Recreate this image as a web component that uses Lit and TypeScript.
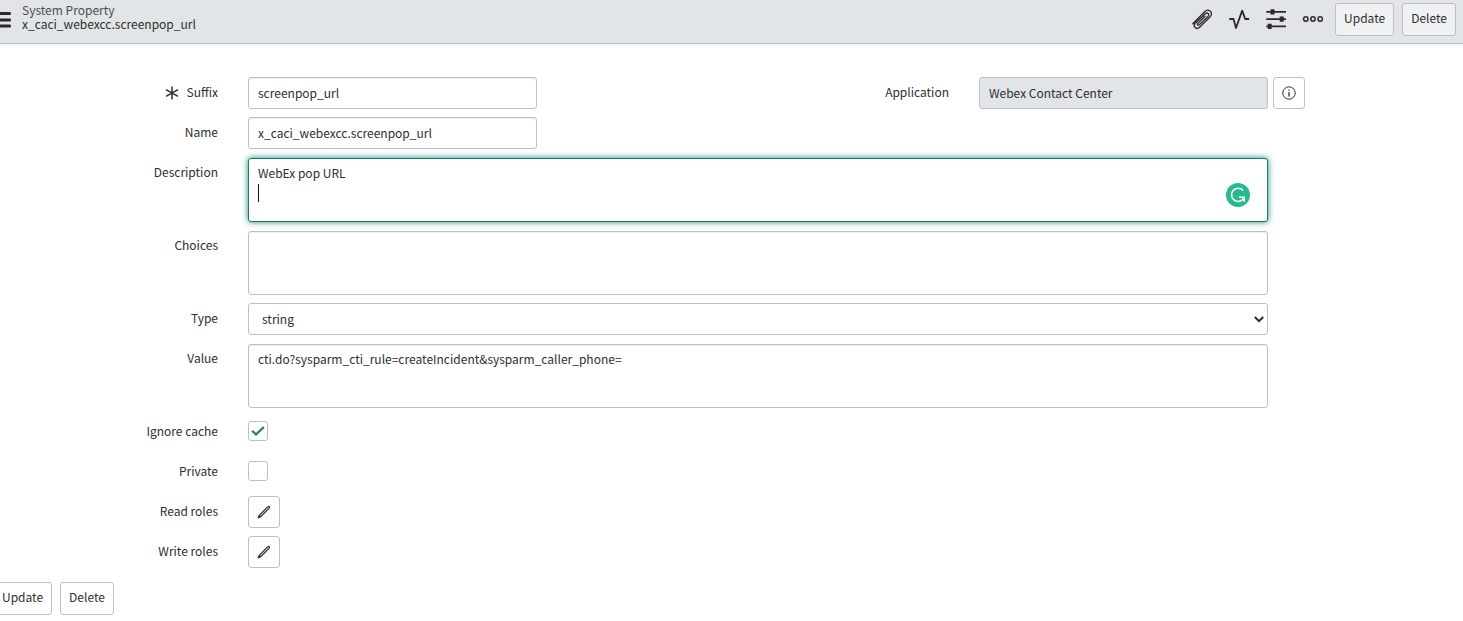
import { LitElement, html, css, nothing } from "lit";
import { customElement, state } from "lit/decorators.js";

const pencil = html`<svg class="icon" viewBox="0 0 14 14" width="14" height="14" fill="#c4c4c4" stroke="#2e2e2e" stroke-width="1.1" stroke-linejoin="round" aria-hidden="true">
  <path d="M1.300 12.700 2.700 9.800 10.800 1.700Q11.600 1 12.300 1.700T12.300 3.200L4.200 11.300Z" />
  <path d="M1.300 12.700 2.300 10.700 3.300 11.700Z" fill="#2e2e2e" />
</svg>`;

const asterisk = html`<svg class="required" viewBox="0 0 14 14" width="14" height="14" fill="none" stroke="#2e2e2e" stroke-width="1.5" role="img" aria-label="Required">
  <path d="M7 .5V13.500M1 3.600 13 10.400M13 3.600 1 10.400" />
</svg>`;

@customElement("app-root")
export class AppRoot extends LitElement {
  @state() private ignoreCache = true;
  @state() private isPrivate = false;

  static styles = css`
    :host {
      display: block;
      background: #fff;
      color: #2e2e2e;
      font-family: "Noto Sans CJK SC", "Noto Sans", sans-serif;
      font-size: 12px;
      line-height: 20px;
    }
    * {
      box-sizing: border-box;
    }
    svg {
      display: block;
      flex: none;
    }
    button,
    input,
    textarea,
    select {
      margin: 0;
      font: inherit;
      color: inherit;
    }
    .header {
      display: flex;
      align-items: flex-start;
      justify-content: space-between;
      height: 44px;
      padding: 3px 7px 0 0;
      background: #e1e5e8;
      border-bottom: 1px solid #bfc1c3;
      box-shadow: 0 1px 1px #ececec;
    }
    .heading,
    .tools,
    .footer {
      display: flex;
    }
    .heading {
      gap: 10px;
    }
    .tools {
      align-items: center;
      gap: 8px;
    }
    .icons {
      display: flex;
      gap: 13px;
      padding: 0 2px 1px 0;
    }
    .plain {
      padding: 0;
      border: 0;
      background: none;
    }
    .menu {
      padding-top: 5px;
    }
    .title {
      margin: 0;
      font-size: 12px;
      font-weight: 400;
      line-height: 14px;
    }
    .title span {
      display: block;
    }
    .table {
      color: #4b4e50;
    }
    .button {
      height: 33px;
      padding: 0 8px 3px;
      border: 1px solid #bdc0c2;
      border-radius: 3px;
      background: #fff;
      white-space: nowrap;
    }
    .header .button {
      background: #f0f1f3;
    }
    .form {
      display: grid;
      gap: 8px;
      padding-top: 33px;
    }
    .row {
      display: grid;
      grid-template-columns: 248px 289fr 442fr 289fr 195px;
      min-height: 32px;
    }
    .label {
      display: flex;
      justify-content: flex-end;
      gap: 8px;
      padding: 5px 30px 0 0;
      height: 30px;
    }
    .required {
      margin-top: 4px;
    }
    .field {
      width: 100%;
      height: 32px;
      padding: 0 9px 2px;
      border: 1px solid #bdc0c2;
      border-radius: 3px;
      background: #fff;
      box-shadow: inset 0 1px 1px #eee;
      outline: none;
    }
    .field[readonly] {
      background: #e1e5e8;
      box-shadow: none;
    }
    .wide {
      grid-column: 2 / 5;
      position: relative;
    }
    .area {
      display: block;
      height: 64px;
      margin-top: 1px;
      padding: 4px 9px;
      resize: none;
    }
    .active {
      border-color: #1f7a68;
      box-shadow: 0 0 6px #1f8476;
    }
    .caret {
      position: absolute;
      left: 10px;
      top: 27px;
      width: 1px;
      height: 18px;
      background: #111;
    }
    .assistant {
      position: absolute;
      right: 18px;
      top: 26px;
    }
    .select {
      appearance: none;
      padding: 0 13px;
      box-shadow: none;
    }
    .chevron {
      position: absolute;
      right: 4px;
      top: 13px;
      pointer-events: none;
    }
    .info,
    .edit {
      display: flex;
      align-items: center;
      justify-content: center;
      width: 32px;
      height: 32px;
      padding: 0;
    }
    .info {
      margin-left: 5px;
    }
    .check {
      display: grid;
      width: 20px;
      height: 20px;
      margin-top: 5px;
    }
    .box,
    .tick {
      grid-area: 1 / 1;
    }
    .box {
      appearance: none;
      width: 20px;
      height: 20px;
      border: 1px solid #bdc0c2;
      border-radius: 3px;
      background: #fff;
    }
    .tick {
      place-self: center;
      z-index: 1;
      pointer-events: none;
    }
    .footer {
      gap: 8px;
      margin: 14px 0 6px -7px;
    }
  `;

  private checkbox(id: string, label: string, checked: boolean, change: (v: boolean) => void) {
    return html`<div class="row">
      <label class="label" for=${id}>${label}</label>
      <div class="check">
        <input class="box" id=${id} type="checkbox" .checked=${checked}
          @change=${(e: Event) => change((e.target as HTMLInputElement).checked)} />
        ${checked
          ? html`<svg class="tick" viewBox="0 0 14 12" width="14" height="12" fill="none" stroke="#1f7a68" stroke-width="2.200" aria-hidden="true"><path d="M1.200 5.800 5 9.500 12.800 2" /></svg>`
          : nothing}
      </div>
    </div>`;
  }

  private roles(id: string, label: string) {
    return html`<div class="row">
      <label class="label" for=${id}>${label}</label>
      <button class="button edit" id=${id} type="button">${pencil}</button>
    </div>`;
  }

  render() {
    return html`
      <header class="header">
        <div class="heading">
          <button class="plain menu" type="button" aria-label="Menu">
            <svg viewBox="0 0 12 18" width="12" height="18" fill="#2a2a2c"><path d="M0 1h10q1 0 1 1.500T10 4H0ZM0 7.500h10q1 0 1 1.500t-1 1.500H0ZM0 13.500h10q1 0 1 1.500t-1 1.500H0Z" /></svg>
          </button>
          <h1 class="title"><span class="table">System Property</span><span>x_caci_webexcc.screenpop_url</span></h1>
        </div>
        <div class="tools">
          <div class="icons">
            <button class="plain" type="button" aria-label="Attachments">
              <svg viewBox="0 0 24 24" width="24" height="24" fill="none" stroke="#2a2a2c" stroke-width="1.300" stroke-linecap="round"><path d="M2.800 16.800 14.600 4.700c4-3.900 9.400.9 5.600 5.100L9.600 20.200c-3.400 3.100-7.200-.8-4.400-3.900L15.500 6.600c2.200-1.600 4.300.6 2.700 2.600L9.300 17.800c-1.400 1-2.500-.1-1.500-1.400L15 9.300" /></svg>
            </button>
            <button class="plain" type="button" aria-label="Activity stream">
              <svg viewBox="0 0 24 24" width="24" height="24" fill="none" stroke="#2a2a2c" stroke-width="1.800" stroke-linejoin="round"><path d="M2.300 12H6.500L9 21 15.200 3.600 18.200 12H22.200" /></svg>
            </button>
            <button class="plain" type="button" aria-label="Personalize form">
              <svg viewBox="0 0 24 24" width="24" height="24" fill="#2a2a2c"><path d="M2.300 4H22V5.800H2.300ZM6.500 2.200h4v5.400h-4ZM2.300 11.200H22V13H2.300ZM15.700 9.400h4v5.400h-4ZM2.300 18.500H22v1.800H2.300ZM3.700 16.700h4v5.400h-4Z" /></svg>
            </button>
            <button class="plain" type="button" aria-label="More options">
              <svg viewBox="0 0 24 24" width="24" height="24" fill="none" stroke="#2a2a2c" stroke-width="1.500"><circle cx="4.800" cy="12" r="2.200" /><circle cx="12" cy="12" r="2.200" /><circle cx="19.200" cy="12" r="2.200" /></svg>
            </button>
          </div>
          <button class="button" type="button">Update</button>
          <button class="button" type="button">Delete</button>
        </div>
      </header>
      <main>
        <form class="form" @submit=${(e: Event) => e.preventDefault()}>
          <div class="row">
            <label class="label" for="suffix">${asterisk}Suffix</label>
            <input class="field" id="suffix" type="text" value="screenpop_url" />
            <label class="label" for="application">Application</label>
            <input class="field" id="application" type="text" value="Webex Contact Center" readonly />
            <button class="button info" type="button" aria-label="Preview application">
              <svg viewBox="0 0 14 14" width="14" height="14" fill="none" stroke="#2e2e2e"><circle cx="7" cy="7" r="6.200" /><path d="M7 6v4.500M7 3.500v1.300" stroke-width="1.300" /></svg>
            </button>
          </div>
          <div class="row">
            <label class="label" for="name">Name</label>
            <input class="field" id="name" type="text" value="x_caci_webexcc.screenpop_url" />
          </div>
          <div class="row">
            <label class="label" for="description">Description</label>
            <div class="wide">
              <textarea class="field area active" id="description" spellcheck="false" .value=${"WebEx pop URL\n"}></textarea>
              <span class="caret"></span>
              <svg class="assistant" viewBox="0 0 24 24" width="24" height="24" fill="none" aria-hidden="true">
                <circle cx="12" cy="12" r="12" fill="#29b990" />
                <path d="M17 7.400A6.600 6.600 0 1 0 17.500 15.700M13 14.200H18.200V18.800" stroke="#fff" stroke-width="1.600" />
              </svg>
            </div>
          </div>
          <div class="row">
            <label class="label" for="choices">Choices</label>
            <div class="wide"><textarea class="field area" id="choices"></textarea></div>
          </div>
          <div class="row">
            <label class="label" for="type">Type</label>
            <div class="wide">
              <select class="field select" id="type"><option>string</option></select>
              <svg class="chevron" viewBox="0 0 10 7" width="10" height="7" fill="none" stroke="#2a2a2c" stroke-width="2"><path d="M.8 1 5 5.200 9.200 1" /></svg>
            </div>
          </div>
          <div class="row">
            <label class="label" for="value">Value</label>
            <div class="wide"><textarea class="field area" id="value" spellcheck="false" .value=${"cti.do?sysparm_cti_rule=createIncident&sysparm_caller_phone="}></textarea></div>
          </div>
          ${this.checkbox("ignore-cache", "Ignore cache", this.ignoreCache, (v) => (this.ignoreCache = v))}
          ${this.checkbox("private", "Private", this.isPrivate, (v) => (this.isPrivate = v))}
          ${this.roles("read-roles", "Read roles")}
          ${this.roles("write-roles", "Write roles")}
        </form>
        <div class="footer">
          <button class="button" type="button">Update</button>
          <button class="button" type="button">Delete</button>
        </div>
      </main>
    `;
  }
}
